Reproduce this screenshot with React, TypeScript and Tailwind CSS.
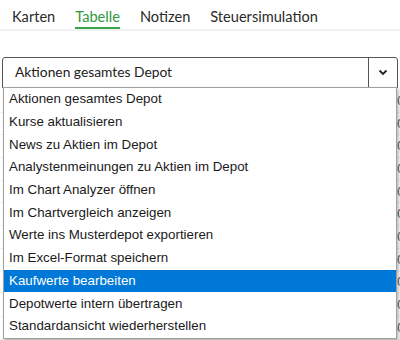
import React from "react";

const items = [
  "Aktionen gesamtes Depot",
  "Kurse aktualisieren",
  "News zu Aktien im Depot",
  "Analystenmeinungen zu Aktien im Depot",
  "Im Chart Analyzer öffnen",
  "Im Chartvergleich anzeigen",
  "Werte ins Musterdepot exportieren",
  "Im Excel-Format speichern",
  "Kaufwerte bearbeiten",
  "Depotwerte intern übertragen",
  "Standardansicht wiederherstellen",
];

const rows = [
  ["Adidas", "A1EWWW", "12.50", "212.40", "2.655,00"],
  ["Allianz", "840400", "10.00", "245.30", "2.453,00"],
  ["BASF", "BASF11", "40.00", "44.20", "1.768,00"],
  ["Bayer", "BAY001", "30.00", "27.80", "834,00"],
  ["BMW", "519000", "20.00", "88.10", "1.762,00"],
  ["Daimler", "710000", "25.00", "60.40", "1.510,00"],
  ["Deutsche Bank", "514000", "80.00", "11.20", "896,00"],
  ["E.ON", "ENAG99", "100.00", "11.90", "1.190,00"],
  ["Henkel", "604843", "15.00", "70.20", "1.053,00"],
  ["Infineon", "623100", "60.00", "32.70", "1.962,00"],
  ["Siemens", "723610", "12.00", "160.30", "1.923,60"],
  ["Aktien", "888/X", "11070", "2,125.10", "2475"],
];

export default function App() {
  return (
    <div className="relative w-[400px] h-[340px] overflow-hidden bg-white" style={{ fontFamily: "Lato, 'Noto Sans', sans-serif" }}>
      <div className="flex h-[31px] items-center gap-[20px] border-b-2 border-[#f2f2f2] pl-[12px] text-[14.6px] text-[#2b2b2b]">
        <span className="h-full pt-[6px]">Karten</span>
        <span className="h-full border-b-2 border-[#3aa64c] pt-[6px] text-[#2e9a3c]">Tabelle</span>
        <span className="h-full pt-[6px]">Notizen</span>
        <span className="h-full pt-[6px]">Steuersimulation</span>
      </div>
      <div className="h-[26px]" />
      <div className="mx-[2px] flex h-[31px] items-stretch rounded-t-[3px] border border-[#555] text-[13.8px] text-[#222]">
        <div className="flex flex-1 items-center pl-[12px]">Aktionen gesamtes Depot</div>
        <div className="flex w-[29px] items-center justify-center border-l border-[#555]">
          <svg width="10" height="7" viewBox="0 0 10 7" fill="none">
            <path d="M1.5 1.5L5 5L8.5 1.5" stroke="#222" strokeWidth="1.8" />
          </svg>
        </div>
      </div>
      <div className="flex flex-col pt-[2px] text-[12px] text-[#555]" style={{ fontFamily: "'Liberation Sans', Arial, sans-serif" }}>
        {rows.map((r, i) => (
          <div key={i} className="grid h-[22.7px] grid-cols-[90px_90px_70px_70px_80px] items-center border-b border-[#eee] px-[4px]">
            {r.map((c, j) => (
              <span key={j} className={j === 0 ? "" : "text-right"}>{c}</span>
            ))}
          </div>
        ))}
      </div>
      <div
        className="absolute left-[3px] top-[87px] flex w-[394px] flex-col border border-[#a0a0a0] bg-white text-[13.33px] text-[#1a1a1a] shadow-[2px_2px_3px_rgba(0,0,0,0.25)]"
        style={{ fontFamily: "'Liberation Sans', Arial, sans-serif" }}
      >
        {items.map((t, i) => (
          <div
            key={t}
            className={
              "flex h-[22.7px] items-center pl-[5px] " +
              (i === 8 ? "bg-[#0078d7] text-white" : "")
            }
          >
            {t}
          </div>
        ))}
      </div>
    </div>
  );
}
